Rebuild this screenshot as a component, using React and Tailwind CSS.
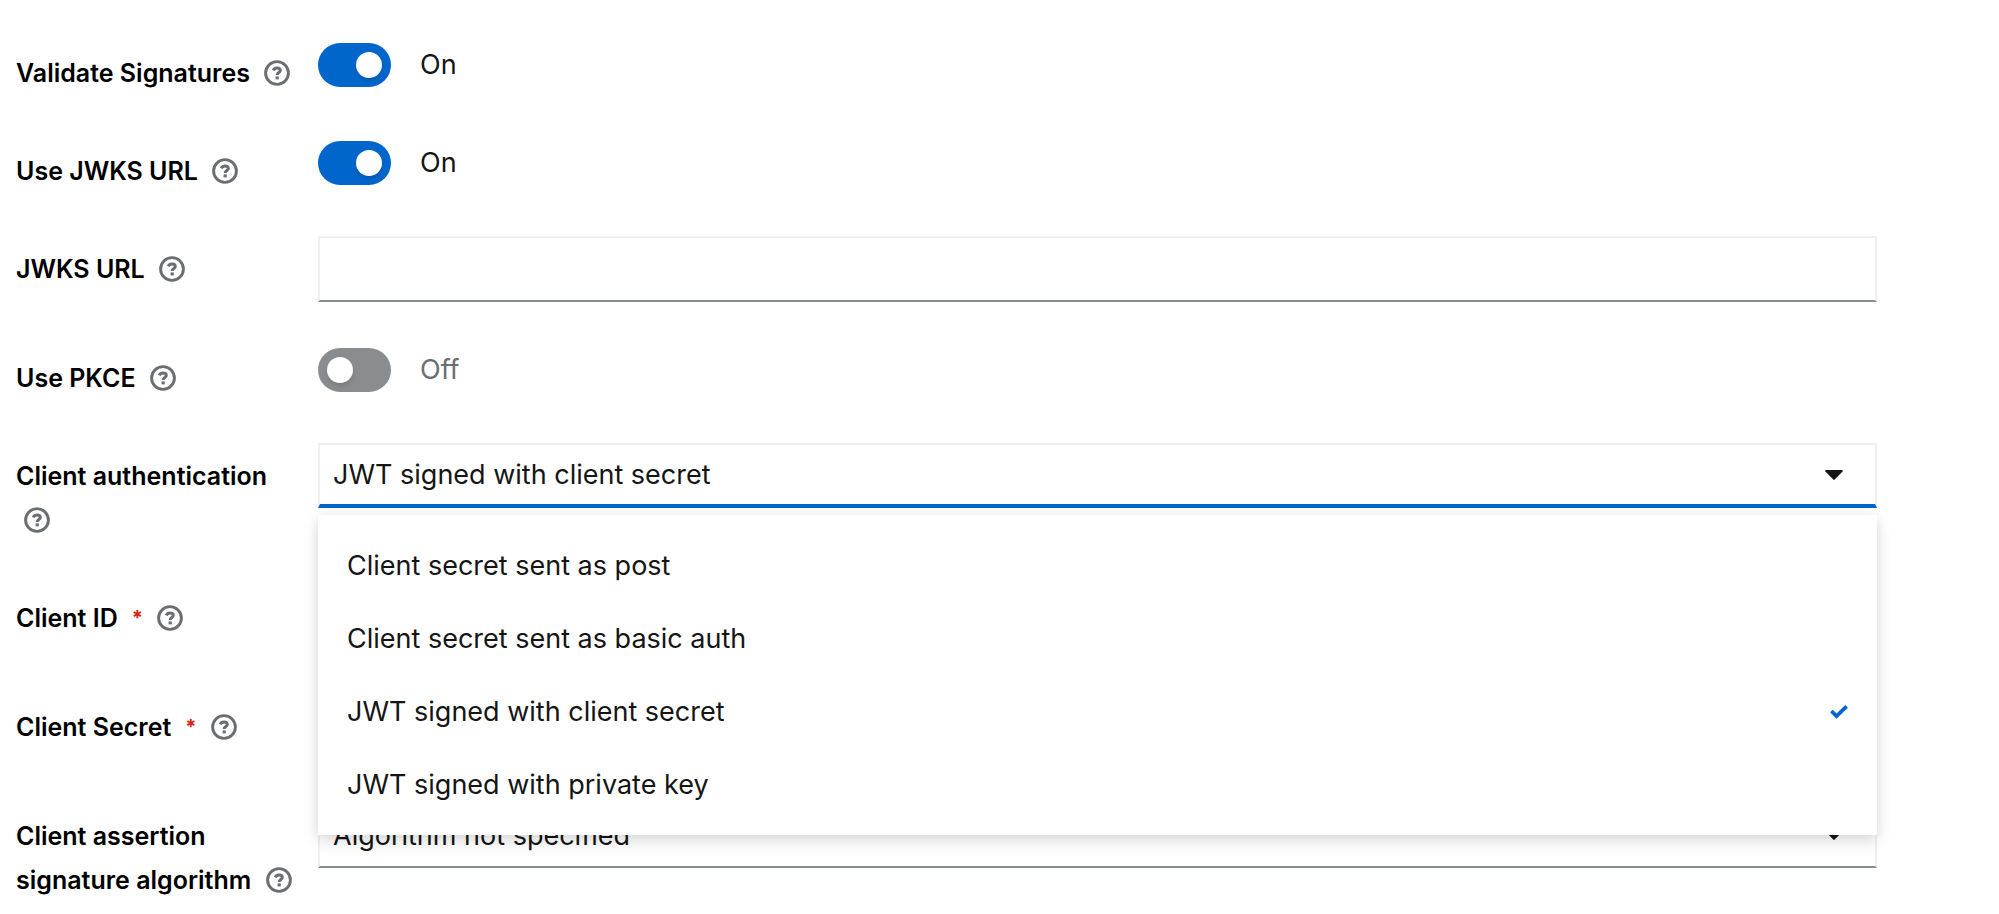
import { useState } from 'react';

const AUTH_METHODS = [
  'Client secret sent as post',
  'Client secret sent as basic auth',
  'JWT signed with client secret',
  'JWT signed with private key',
];

function HelpButton({ label }) {
  return (
    <button type="button" aria-label={`Help for ${label}`} className="ml-2 inline-block align-[-4px] text-[#6a6e73]">
      <svg viewBox="0 0 26 26" className="block size-[26px]" fill="none" stroke="currentColor">
        <circle cx="13" cy="13" r="11.4" strokeWidth="2.9" />
        <path d="M9.2 10.3C10 8.7 11.3 7.9 13 7.9C15 7.9 16.3 8.9 16.3 10.5C16.3 12.6 13.2 12.6 13.2 15" strokeWidth="3" />
        <path d="M11.6 16.4h3.2v3h-3.2z" fill="currentColor" stroke="none" />
      </svg>
    </button>
  );
}

function Row({ id, label, required, children }) {
  return (
    <div className="flex items-start">
      <div className="w-[302px] shrink-0 pt-[11px] pr-3 text-[25px] leading-[44px] font-semibold text-black">
        <label htmlFor={id}>{label}</label>
        {required && (
          <span aria-hidden="true" className="ml-[14px] align-[2px] text-[20px] leading-5 font-bold text-[#d9230f]">
            *
          </span>
        )}{' '}
        <HelpButton label={label} />
      </div>
      <div className="relative min-w-0 grow">{children}</div>
    </div>
  );
}

function Toggle({ id, checked, onChange }) {
  return (
    <label className="mt-[3px] flex w-fit cursor-pointer items-center gap-[29px]">
      <input
        id={id}
        type="checkbox"
        role="switch"
        checked={checked}
        onChange={(e) => onChange(e.target.checked)}
        className="peer sr-only"
      />
      <span
        className={`flex h-11 w-[73px] items-center rounded-full px-[9px] ${
          checked ? 'justify-end bg-[#0066cc]' : 'justify-start bg-[#8a8d90]'
        }`}
      >
        <span className="size-[26px] rounded-full bg-white shadow-md" />
      </span>
      <span className={checked ? 'text-[#151515]' : 'text-[#6a6e73]'}>{checked ? 'On' : 'Off'}</span>
    </label>
  );
}

function TextInput({ id }) {
  return (
    <input
      id={id}
      type="text"
      className="block h-[66px] w-full border-2 border-[#f0f0f0] border-b-[#8a8d90] bg-white px-[13px] outline-none"
    />
  );
}

function Select({ id, open, value, options, onChange }) {
  return (
    <div className="relative">
      <select
        id={id}
        value={value}
        onChange={(e) => onChange(e.target.value)}
        className={`block h-[65px] w-full appearance-none border-2 border-[#f0f0f0] bg-white px-[13px] outline-none ${
          open ? 'border-b-4 border-b-[#0066cc]' : 'border-b-[#8a8d90]'
        }`}
      >
        {options.map((option) => (
          <option key={option}>{option}</option>
        ))}
      </select>
      <svg viewBox="0 0 18 10" className="pointer-events-none absolute top-[27px] right-[34px] h-[10px] w-[18px]" fill="#151515">
        <path d="M1 0h16c.9 0 1.2.9.6 1.5L9.7 9.6c-.4.4-1 .4-1.4 0L.4 1.5C-.2.9.1 0 1 0z" />
      </svg>
    </div>
  );
}

export default function App() {
  const [validateSignatures, setValidateSignatures] = useState(true);
  const [useJwks, setUseJwks] = useState(true);
  const [usePkce, setUsePkce] = useState(false);
  const [authMethod, setAuthMethod] = useState(AUTH_METHODS[2]);
  const [open, setOpen] = useState(true);
  const [algorithm, setAlgorithm] = useState('Algorithm not specified');

  return (
    <form className="flex flex-col gap-[43px] bg-white pt-10 pr-[122px] pl-4 font-['Inter','Liberation_Sans',sans-serif] text-[27px] leading-[44px] text-[#151515]">
      <Row id="validate-signatures" label="Validate Signatures">
        <Toggle id="validate-signatures" checked={validateSignatures} onChange={setValidateSignatures} />
      </Row>
      <Row id="use-jwks" label="Use JWKS URL">
        <Toggle id="use-jwks" checked={useJwks} onChange={setUseJwks} />
      </Row>
      <Row id="jwks-url" label="JWKS URL">
        <TextInput id="jwks-url" />
      </Row>
      <Row id="use-pkce" label="Use PKCE">
        <Toggle id="use-pkce" checked={usePkce} onChange={setUsePkce} />
      </Row>
      <Row id="client-auth" label="Client authentication">
        <Select id="client-auth" open={open} value={authMethod} options={AUTH_METHODS} onChange={setAuthMethod} />
        {open && (
          <ul
            role="listbox"
            aria-label="Client authentication"
            className="absolute inset-x-0 top-[72px] z-10 bg-white py-[14px] shadow-[0_7px_15px_rgba(3,3,3,0.12),0_0_11px_rgba(3,3,3,0.06)]"
          >
            {AUTH_METHODS.map((method) => (
              <li key={method} role="option" aria-selected={method === authMethod}>
                <button
                  type="button"
                  onClick={() => {
                    setAuthMethod(method);
                    setOpen(false);
                  }}
                  className="flex h-[73px] w-full items-center justify-between px-[29px] text-left"
                >
                  {method}
                  {method === authMethod && (
                    <svg viewBox="0 0 18 14" className="h-[14px] w-[18px]" fill="none" stroke="#0066cc" strokeWidth="3.8">
                      <path d="M1.4 6L6.5 11.1L16.6 1.4" />
                    </svg>
                  )}
                </button>
              </li>
            ))}
          </ul>
        )}
      </Row>
      <Row id="client-id" label="Client ID" required>
        <TextInput id="client-id" />
      </Row>
      <Row id="client-secret" label="Client Secret" required>
        <TextInput id="client-secret" />
      </Row>
      <Row id="algorithm" label="Client assertion signature algorithm">
        <Select id="algorithm" value={algorithm} options={['Algorithm not specified']} onChange={setAlgorithm} />
      </Row>
    </form>
  );
}
